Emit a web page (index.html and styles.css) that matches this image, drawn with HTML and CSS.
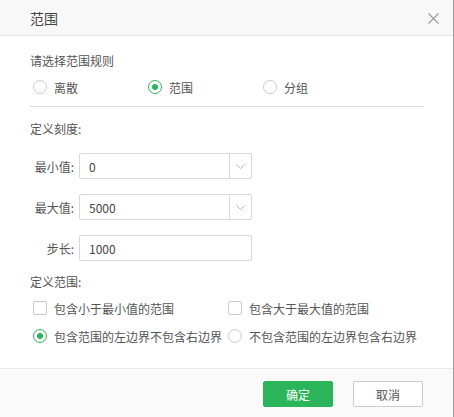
FILE: index.html
```html
<!DOCTYPE html>
<html lang="zh-CN">
<head>
  <meta charset="UTF-8">
  <title>范围</title>
  <link rel="stylesheet" href="styles.css">
</head>
<body>
  <div class="dialog">
    <div class="dialog-header">
      <span class="title">范围</span>
      <span class="close">
        <svg width="11" height="11" viewBox="0 0 11 11"><path d="M0.5 0.5L10.5 10.5M10.5 0.5L0.5 10.5" stroke="#999" stroke-width="1.1" fill="none"/></svg>
      </span>
    </div>

    <div class="dialog-body">
      <div class="section-title">请选择范围规则</div>
      <div class="option-row three">
        <label class="opt"><span class="radio"></span>离散</label>
        <label class="opt"><span class="radio checked"></span>范围</label>
        <label class="opt"><span class="radio"></span>分组</label>
      </div>
      <div class="divider"></div>

      <div class="section-title scale">定义刻度:</div>
      <div class="field">
        <span class="field-label">最小值:</span>
        <div class="input combo">
          <span class="value">0</span>
          <span class="arrow"><svg width="9" height="5" viewBox="0 0 9 5"><path d="M0.5 0.5L4.5 4.5L8.5 0.5" stroke="#bbb" fill="none"/></svg></span>
        </div>
      </div>
      <div class="field">
        <span class="field-label">最大值:</span>
        <div class="input combo">
          <span class="value">5000</span>
          <span class="arrow"><svg width="9" height="5" viewBox="0 0 9 5"><path d="M0.5 0.5L4.5 4.5L8.5 0.5" stroke="#bbb" fill="none"/></svg></span>
        </div>
      </div>
      <div class="field">
        <span class="field-label">步长:</span>
        <div class="input">
          <span class="value">1000</span>
        </div>
      </div>

      <div class="section-title range">定义范围:</div>
      <div class="option-row two">
        <label class="opt"><span class="checkbox"></span>包含小于最小值的范围</label>
        <label class="opt"><span class="checkbox"></span>包含大于最大值的范围</label>
      </div>
      <div class="option-row two second">
        <label class="opt"><span class="radio checked"></span>包含范围的左边界不包含右边界</label>
        <label class="opt"><span class="radio"></span>不包含范围的左边界包含右边界</label>
      </div>
    </div>

    <div class="dialog-footer">
      <button class="btn primary">确定</button>
      <button class="btn">取消</button>
    </div>
  </div>
</body>
</html>
```

FILE: styles.css
```css
body {
  margin: 0;
  background-color: white;
  font-family: "Noto Sans CJK SC", "Liberation Sans", sans-serif;
  font-size: 12px;
  color: #555;
}

.dialog {
  width: 453px;
  height: 417px;
  border-right: 1px solid #999;
  display: flex;
  flex-direction: column;
  background-color: white;
}

.dialog-header {
  height: 35px;
  background-color: #f8f8f8;
  border-bottom: 1px solid #e6e6e6;
  display: flex;
  align-items: center;
  justify-content: space-between;
  padding: 0 14px 0 30px;
}

.title {
  font-size: 14px;
  color: #444;
}

.close {
  display: flex;
  margin-top: 1px;
}

.dialog-body {
  padding: 16px 30px 0 30px;
}

.section-title {
  height: 18px;
  line-height: 18px;
}

.section-title.scale {
  margin-top: 13px;
}

.section-title.range {
  margin-top: 12px;
}

.option-row {
  display: flex;
  margin-top: 8px;
  padding-left: 3px;
}

.option-row.second {
  margin-top: 10px;
}

.opt {
  display: flex;
  align-items: center;
  height: 18px;
  white-space: nowrap;
}

.option-row.three .opt {
  width: 115px;
}

.option-row.two .opt {
  width: 197px;
}

.radio {
  width: 12px;
  height: 12px;
  border: 1px solid #ccc;
  border-radius: 50%;
  margin-right: 7px;
  box-sizing: content-box;
  display: flex;
  align-items: center;
  justify-content: center;
}

.radio.checked {
  border-color: #2bb55b;
}

.radio.checked::after {
  content: "";
  width: 6px;
  height: 6px;
  border-radius: 50%;
  background-color: #2bb55b;
}

.checkbox {
  width: 12px;
  height: 12px;
  border: 1px solid #ccc;
  border-radius: 2px;
  margin-right: 7px;
}

.divider {
  margin-top: 10px;
  border-top: 1px solid #ddd;
  margin-right: -1px;
}

.field {
  display: flex;
  align-items: center;
  margin-top: 15px;
}

.field-label {
  width: 44px;
  text-align: right;
  margin-right: 5px;
}

.input {
  width: 171px;
  height: 24px;
  border: 1px solid #d9d9d9;
  border-radius: 2px;
  display: flex;
  align-items: center;
}

.value {
  flex: 1;
  padding-left: 9px;
  color: #444;
}

.arrow {
  width: 21px;
  height: 24px;
  border-left: 1px solid #d9d9d9;
  display: flex;
  align-items: center;
  justify-content: center;
}

.dialog-footer {
  margin-top: auto;
  height: 49px;
  border-top: 1px solid #e8e8e8;
  background-color: #fafafa;
  display: flex;
  justify-content: flex-end;
  align-items: flex-start;
  gap: 20px;
  padding: 12px 30px 0 0;
  box-sizing: border-box;
}

.btn {
  width: 70px;
  height: 26px;
  border: 1px solid #ccc;
  border-radius: 2px;
  background-color: white;
  font-family: inherit;
  font-size: 12px;
  color: #555;
  padding: 0;
  cursor: pointer;
}

.btn.primary {
  background-color: #2bb55b;
  border-color: #2bb55b;
  color: white;
}
```
